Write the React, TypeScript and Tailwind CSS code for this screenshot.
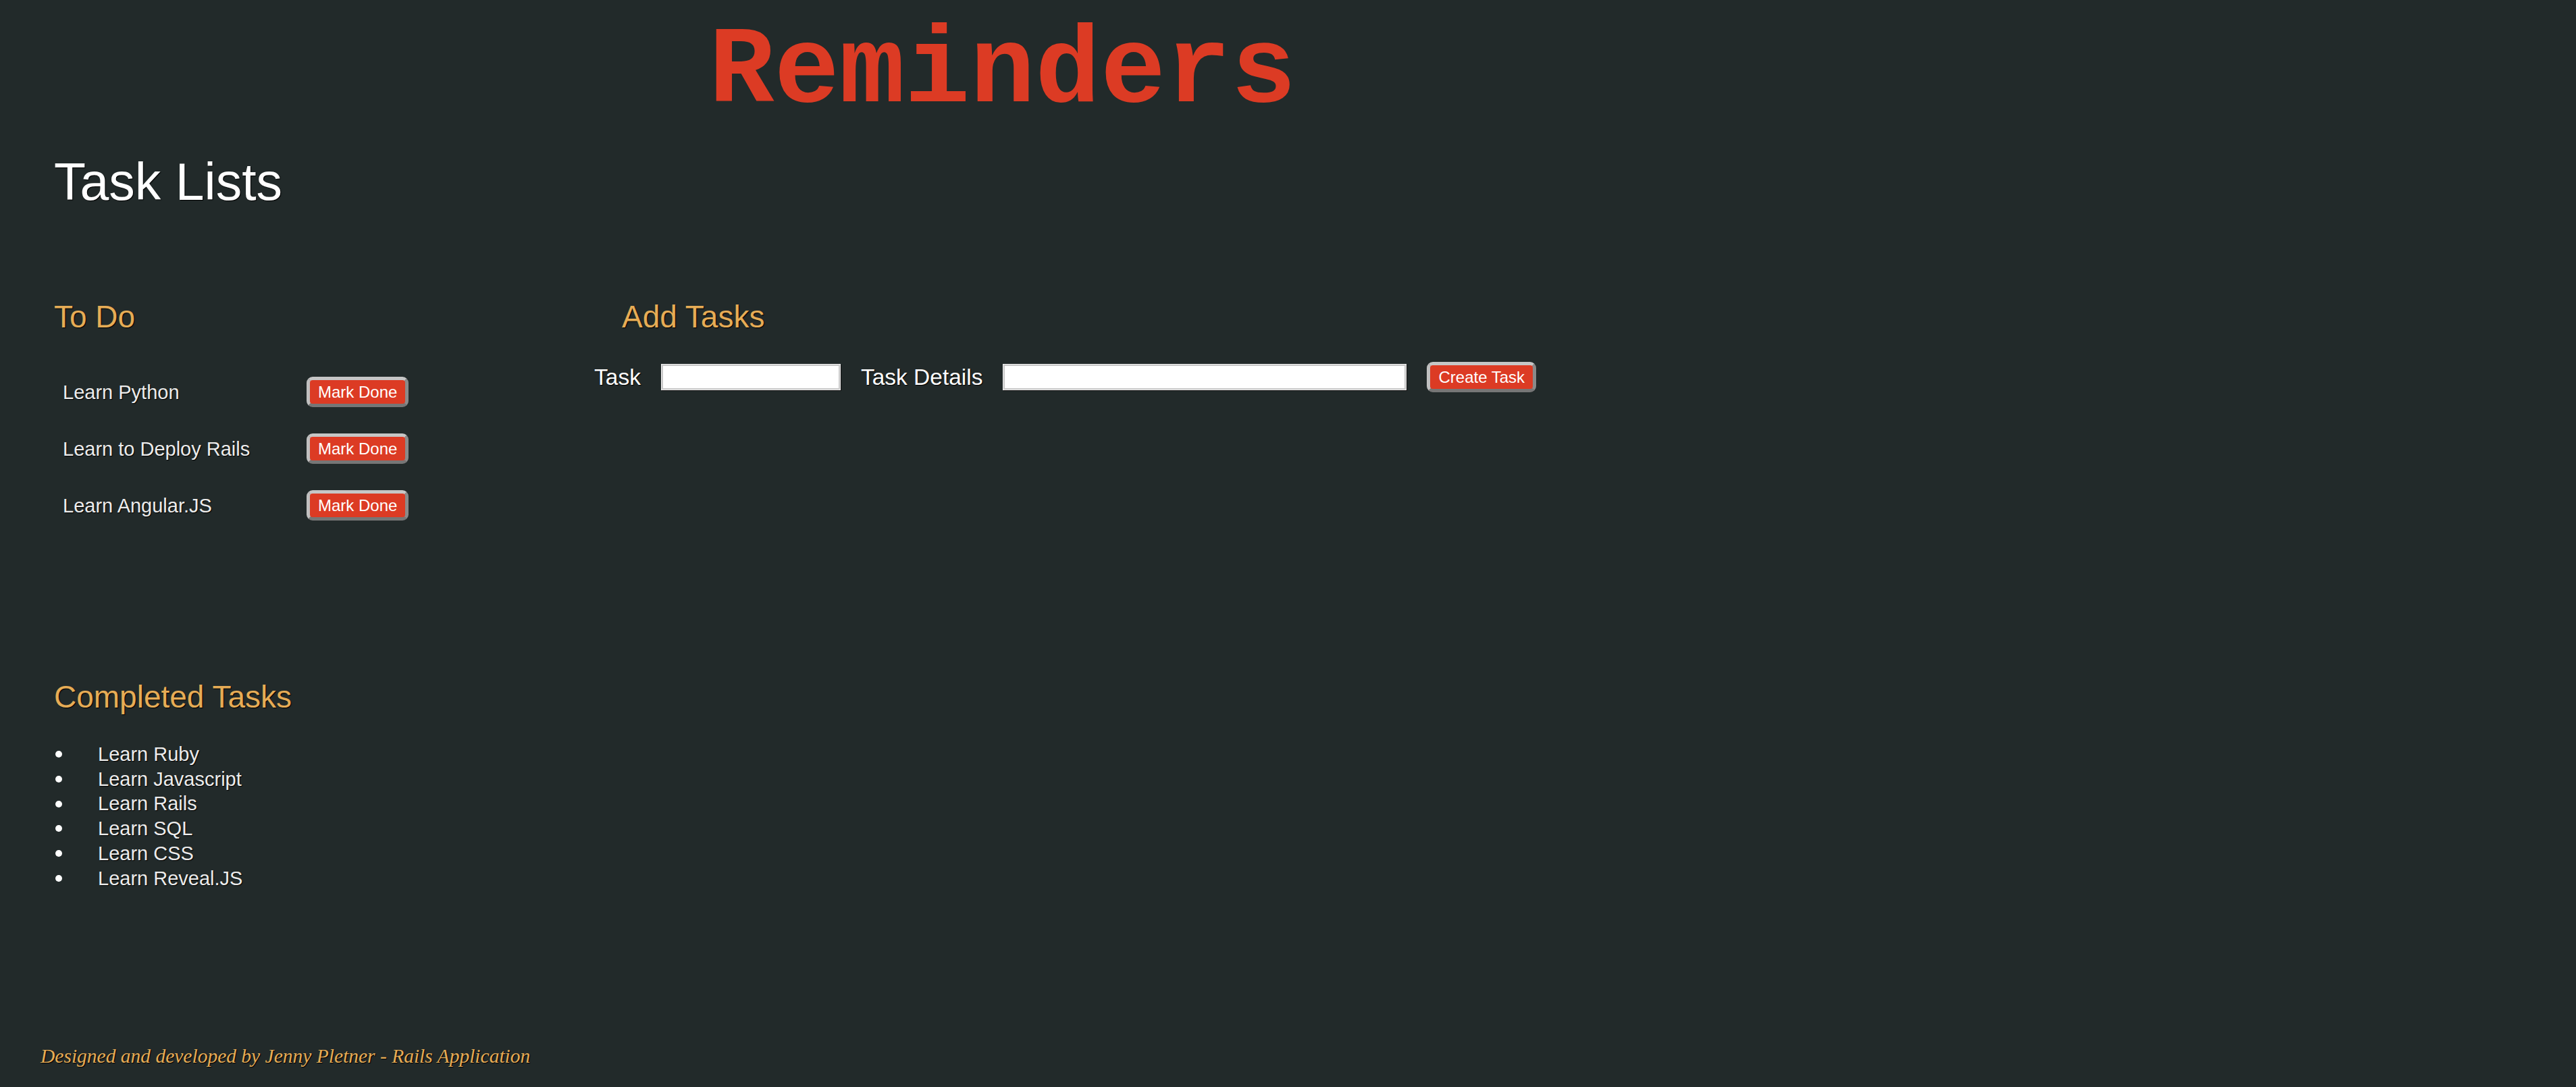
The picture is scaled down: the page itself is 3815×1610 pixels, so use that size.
import React from "react";

const todos = ["Learn Python", "Learn to Deploy Rails", "Learn Angular.JS"];
const done = ["Learn Ruby", "Learn Javascript", "Learn Rails", "Learn SQL", "Learn CSS", "Learn Reveal.JS"];

function RedButton({ label }: { label: string }) {
  return (
    <button
      type="button"
      className="h-[45px] px-[12px] rounded-[9px] border-[5px] border-t-[#c6c6c6] border-l-[#c0c0c0] border-b-[#767676] border-r-[#8a8a8a] bg-[#dc3b24] text-white text-[24px] leading-none whitespace-nowrap [font-family:'Liberation_Sans',Arial,sans-serif]"
    >
      {label}
    </button>
  );
}

export default function App() {
  return (
    <div className="min-h-[1610px] w-full bg-[#222a2a] text-white [font-family:'Liberation_Sans',Arial,sans-serif] [text-shadow:1px_1px_1px_#000]">
      <header className="pt-[27px] pl-[1050px]">
        <h1 className="text-[161px] leading-[160px] font-bold text-[#dc3b24] [font-family:'Liberation_Mono','Courier_New',monospace] [text-shadow:none]">
          Reminders
        </h1>
      </header>

      <main className="pl-[80px]">
        <h2 className="mt-[38px] text-[77px] leading-[88px] text-white">Task Lists</h2>

        <div className="mt-[130px] flex items-start">
          <section className="w-[800px] flex flex-col">
            <h3 className="text-[46px] leading-[53px] text-[#e6ac56]">To Do</h3>
            <ul className="mt-[62px] flex flex-col gap-[39px]">
              {todos.map((t) => (
                <li key={t} className="flex items-center pl-[13px]">
                  <span className="w-[361px] text-[29px] leading-[34px] text-[#ececec]">{t}</span>
                  <RedButton label="Mark Done" />
                </li>
              ))}
            </ul>

            <h3 className="mt-[235px] text-[46px] leading-[53px] text-[#e6ac56]">Completed Tasks</h3>
            <ul className="mt-[40px] flex flex-col">
              {done.map((t) => (
                <li key={t} className="flex items-center text-[29px] leading-[36.7px] text-[#ececec]">
                  <span className="ml-[2px] w-[10px] h-[10px] rounded-full bg-white shrink-0" />
                  <span className="ml-[53px]">{t}</span>
                </li>
              ))}
            </ul>
          </section>

          <section className="flex flex-col">
            <h3 className="pl-[41px] text-[46px] leading-[53px] text-[#e6ac56]">Add Tasks</h3>
            <form className="mt-[40px] flex items-center gap-[30px] h-[45px]">
              <label className="text-[33.5px] leading-none text-white">Task</label>
              <input
                type="text"
                className="w-[266px] h-[39px] bg-white border border-[#f4f4f4] shadow-[inset_0_0_0_2px_#c8c8c8,1px_1px_0_#111]"
              />
              <label className="text-[33.5px] leading-none text-white">Task Details</label>
              <input
                type="text"
                className="w-[598px] h-[39px] bg-white border border-[#f4f4f4] shadow-[inset_0_0_0_2px_#c8c8c8,1px_1px_0_#111]"
              />
              <RedButton label="Create Task" />
            </form>
          </section>
        </div>

        <footer className="mt-[229px] -ml-[20px] pb-[20px]">
          <p className="text-[29.5px] leading-[33px] italic text-[#e6ac56] [font-family:'Liberation_Serif','Times_New_Roman',serif]">
            Designed and developed by Jenny Pletner - Rails Application
          </p>
        </footer>
      </main>
    </div>
  );
}
